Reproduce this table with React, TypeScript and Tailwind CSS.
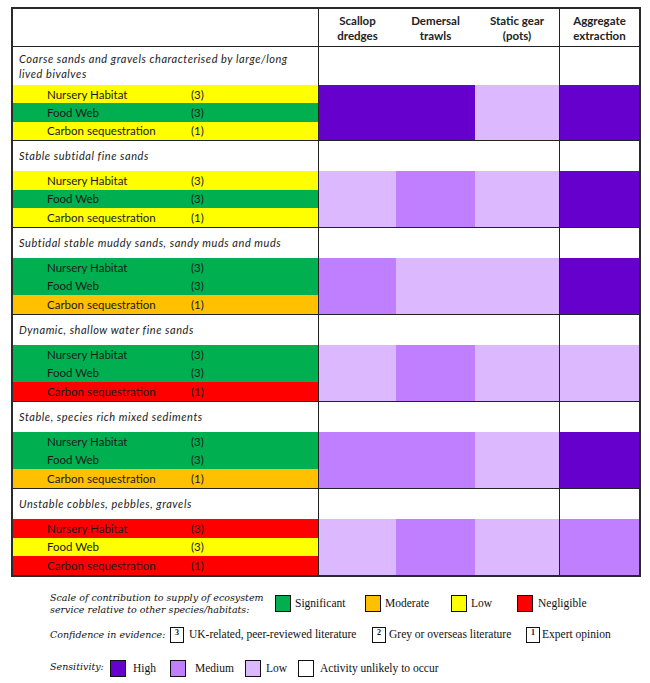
import React from "react";

const Y = "bg-[#ffff00]";
const G = "bg-[#00b050]";
const O = "bg-[#ffc000]";
const R = "bg-[#ff0000]";
const D = "bg-[#6600cc]";
const M = "bg-[#bf7fff]";
const L = "bg-[#dcb9ff]";

type Group = {
  title: string[];
  left: string[];
  right: string[]; // scallop, demersal, static, aggregate
};

const groups: Group[] = [
  { title: ["Coarse sands and gravels characterised by large/long", "lived bivalves"], left: [Y, G, Y], right: [D, D, L, D] },
  { title: ["Stable subtidal fine sands"], left: [Y, G, Y], right: [L, M, L, D] },
  { title: ["Subtidal stable muddy sands, sandy muds and muds"], left: [G, G, O], right: [M, L, L, D] },
  { title: ["Dynamic, shallow water fine sands"], left: [G, G, R], right: [L, M, L, L] },
  { title: ["Stable, species rich mixed sediments"], left: [G, G, O], right: [M, M, L, D] },
  { title: ["Unstable cobbles, pebbles, gravels"], left: [R, Y, R], right: [L, M, L, M] },
];

const items: [string, string][] = [
  ["Nursery Habitat", "(3)"],
  ["Food Web", "(3)"],
  ["Carbon sequestration", "(1)"],
];

function GroupBlock({ g, first, last }: { g: Group; first: boolean; last: boolean }) {
  const titleH = first ? "h-[38px]" : "h-[30px]";
  const rowH = first ? "h-[18.33px]" : "h-[18.67px]";
  return (
    <div className={`flex ${last ? "" : "border-b border-[#222]"}`}>
      <div className="w-[305px] flex flex-col">
        <div className={`${titleH} flex flex-col justify-center pl-[6px] italic text-[11px] tracking-[0.55px] leading-[15px] text-[#222]`}>
          {g.title.map((t, i) => (
            <div key={i}>{t}</div>
          ))}
        </div>
        {items.map((it, i) => (
          <div key={i} className={`${rowH} ${g.left[i]} flex items-center text-[11.5px] text-[#1a1a1a]`}>
            <span className="w-[178px] pl-[34px]">{it[0]}</span>
            <span>{it[1]}</span>
          </div>
        ))}
      </div>
      <div className="w-px bg-[#222]" />
      <div className="flex flex-col w-[240px]">
        <div className={`${titleH} bg-white`} />
        <div className="flex flex-1">
          <div className={`w-[77px] ${g.right[0]}`} />
          <div className={`w-[79px] ${g.right[1]}`} />
          <div className={`w-[84px] ${g.right[2]}`} />
        </div>
      </div>
      <div className="w-px bg-[#222]" />
      <div className="flex flex-col w-[79px]">
        <div className={`${titleH} bg-white`} />
        <div className={`flex-1 ${g.right[3]}`} />
      </div>
    </div>
  );
}

function Swatch({ c }: { c: string }) {
  return <div className={`w-[16px] h-[17px] border-[1.5px] border-[#111] ${c} shrink-0`} />;
}

function NumBox({ n }: { n: string }) {
  return (
    <div className="w-[14px] h-[16px] border-[1.5px] border-[#111] bg-white shrink-0 flex items-start justify-center text-[8px] leading-[10px] font-bold">
      {n}
    </div>
  );
}

const italicLabel = { fontFamily: "'DejaVu Serif', 'Liberation Serif', serif" };

export default function App() {
  return (
    <div className="w-[650px] h-[683px] bg-white overflow-hidden" style={{ fontFamily: "Lato, 'Noto Sans', sans-serif" }}>
      <div className="ml-[11px] mt-[7px] w-[630px] border-2 border-[#2a2a2a]">
        {/* header */}
        <div className="flex h-[38px] border-b border-[#222]">
          <div className="w-[305px]" />
          <div className="w-px bg-[#222]" />
          <div className="flex w-[240px] font-bold text-[11.5px] leading-[15px] text-[#222] text-center items-center">
            <div className="w-[77px]">Scallop<br />dredges</div>
            <div className="w-[79px]">Demersal<br />trawls</div>
            <div className="w-[84px]">Static gear<br />(pots)</div>
          </div>
          <div className="w-px bg-[#222]" />
          <div className="w-[79px] flex items-center justify-center text-center font-bold text-[11.5px] leading-[15px] text-[#222]">
            Aggregate<br />extraction
          </div>
        </div>
        {groups.map((g, i) => (
          <GroupBlock key={i} g={g} first={i === 0} last={i === groups.length - 1} />
        ))}
      </div>

      {/* legend */}
      <div className="pl-[50px] pt-[12px] text-[11.5px] text-[#111]" style={{ fontFamily: "'Liberation Serif', 'DejaVu Serif', serif" }}>
        <div className="flex items-center h-[30px]">
          <div className="w-[225px] italic text-[9.5px] leading-[12px]" style={italicLabel}>
            Scale of contribution to supply of ecosystem<br />service relative to other species/habitats:
          </div>
          <div className="w-[90px] flex items-center gap-[4px]"><Swatch c={G} /><span>Significant</span></div>
          <div className="w-[86px] flex items-center gap-[4px]"><Swatch c={O} /><span>Moderate</span></div>
          <div className="w-[66px] flex items-center gap-[4px]"><Swatch c={Y} /><span>Low</span></div>
          <div className="flex items-center gap-[5px]"><Swatch c={R} /><span>Negligible</span></div>
        </div>
        <div className="flex items-center h-[24px] mt-[4px]">
          <div className="w-[120px] italic text-[9.5px]" style={italicLabel}>Confidence in evidence:</div>
          <div className="w-[202px] flex items-center gap-[5px]"><NumBox n="3" /><span>UK-related, peer-reviewed literature</span></div>
          <div className="w-[154px] flex items-center gap-[3px]"><NumBox n="2" /><span>Grey or overseas literature</span></div>
          <div className="flex items-center gap-[2px]"><NumBox n="1" /><span>Expert opinion</span></div>
        </div>
        <div className="flex items-center h-[24px] mt-[10px]">
          <div className="w-[60px] italic text-[9.5px] -mt-[4px]" style={italicLabel}>Sensitivity:</div>
          <div className="w-[60px] flex items-center gap-[7px]"><Swatch c={D} /><span>High</span></div>
          <div className="w-[75px] flex items-center gap-[9px]"><Swatch c={M} /><span>Medium</span></div>
          <div className="w-[53px] flex items-center gap-[5px]"><Swatch c={L} /><span>Low</span></div>
          <div className="flex items-center gap-[6px]"><Swatch c="bg-white" /><span>Activity unlikely to occur</span></div>
        </div>
      </div>
    </div>
  );
}
